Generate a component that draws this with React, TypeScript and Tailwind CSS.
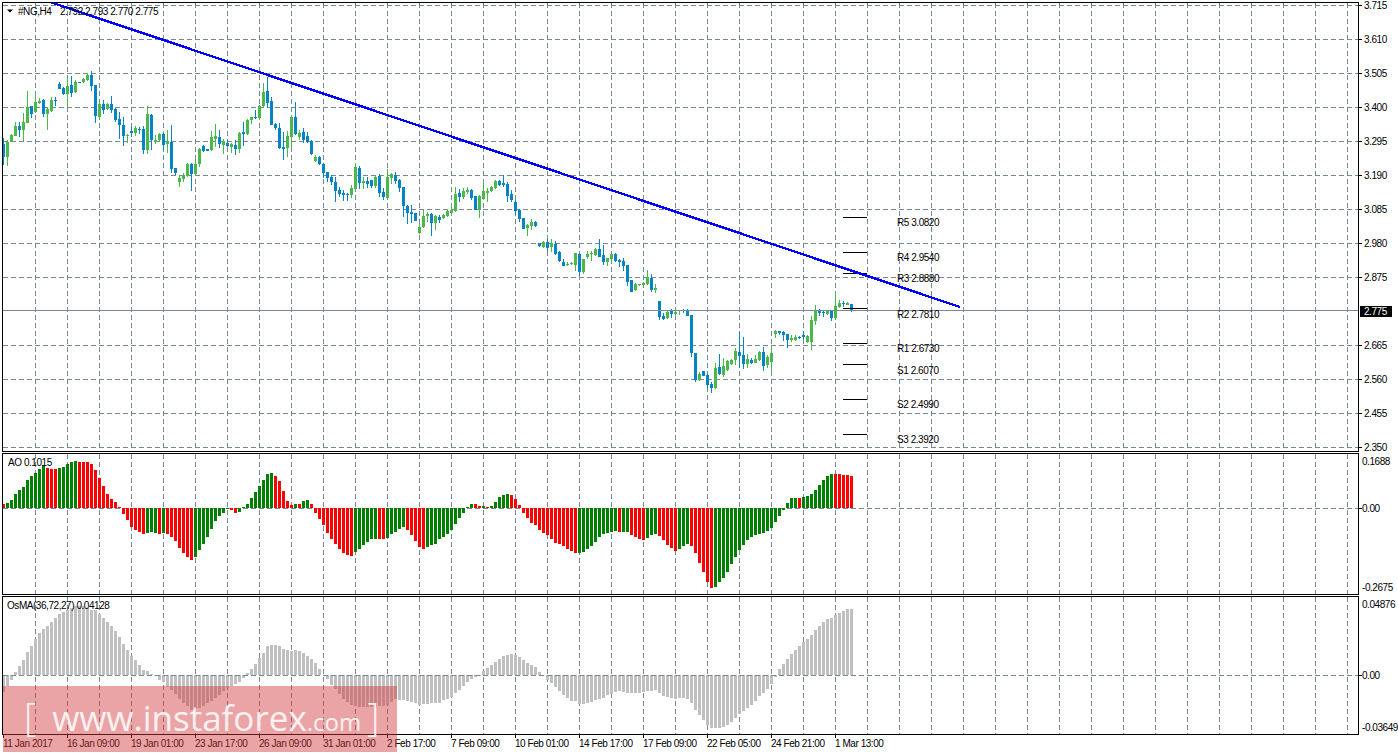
const BLUE = 1;

// wick top, body top, body bottom, wick bottom, colour (page pixels)
const candles: number[][] = [
  [138,144,157,165,1],[140,142,157,166,0],[134,135,142,142,0],[122,126,136,136,0],[122,126,130,137,1],
  [113,122,130,141,0],[91,107,123,123,0],[106,106,114,118,1],[94,102,112,113,0],[98,101,103,104,0],
  [99,100,114,117,1],[107,109,114,130,0],[97,100,111,112,0],[97,100,101,106,1],[82,84,89,89,1],
  [87,88,94,95,1],[76,86,94,107,0],[76,85,93,97,1],[80,82,92,93,0],[82,82,83,83,1],
  [78,79,82,83,0],[73,75,80,81,0],[71,75,86,91,1],[85,85,116,123,1],[100,104,117,118,0],
  [100,104,110,114,1],[103,104,109,110,0],[96,104,110,113,1],[108,109,120,122,1],[112,119,125,139,1],
  [117,125,136,146,1],[134,135,136,143,0],[127,131,133,137,1],[126,128,133,136,0],[127,129,130,134,1],
  [126,129,150,154,1],[106,114,150,154,0],[114,115,140,150,1],[135,140,142,144,0],[133,134,140,142,0],
  [133,134,145,150,1],[130,141,144,153,0],[125,142,169,173,1],[168,168,173,175,1],[175,178,182,187,0],
  [173,175,179,182,0],[163,164,176,177,0],[163,164,174,191,1],[160,164,174,175,0],[148,149,164,167,0],
  [145,146,151,152,1],[149,149,151,151,1],[131,137,150,151,0],[124,136,139,147,0],[130,137,144,148,1],
  [139,141,145,154,0],[140,143,146,147,1],[143,144,147,153,0],[140,145,149,155,1],[132,133,149,153,0],
  [122,132,134,146,1],[119,120,134,135,0],[117,117,120,124,0],[110,117,118,119,1],[105,106,118,119,0],
  [83,92,106,107,0],[77,91,103,108,1],[97,101,125,125,1],[123,124,128,130,1],[123,128,148,149,1],
  [132,147,149,160,1],[131,136,148,157,0],[115,117,137,148,0],[102,117,134,135,1],[130,133,137,140,0],
  [128,132,140,143,1],[132,136,142,143,1],[140,141,154,155,1],[155,157,161,162,0],[156,157,164,165,1],
  [163,164,173,178,1],[172,172,178,182,1],[175,177,182,185,1],[177,182,191,202,1],[187,190,194,197,1],
  [190,193,195,201,1],[193,194,195,201,1],[185,188,195,198,0],[163,167,189,191,0],[166,168,183,189,1],
  [177,181,183,189,0],[177,181,184,188,1],[180,180,186,188,1],[176,177,186,188,0],[174,176,193,197,1],
  [188,192,197,200,1],[169,177,198,199,0],[173,174,178,184,0],[172,175,181,184,1],[179,180,188,192,1],
  [187,187,206,217,1],[205,206,213,224,1],[205,212,214,223,1],[213,213,221,221,1],[224,227,233,234,0],
  [210,216,227,228,0],[212,214,216,222,0],[213,214,223,236,1],[215,216,223,230,0],[215,217,220,223,1],
  [214,215,218,219,0],[210,211,216,217,0],[205,210,213,214,0],[187,194,211,212,0],[189,193,197,202,1],
  [188,191,197,199,0],[187,190,192,194,0],[189,190,198,200,1],[196,196,210,210,1],[195,196,210,218,0],
  [182,191,199,200,0],[188,191,193,202,0],[186,187,191,192,0],[180,181,188,189,0],[180,181,185,186,1],
  [175,183,185,187,1],[182,184,196,202,1],[190,194,200,202,1],[200,202,211,215,1],[209,210,219,222,1],
  [218,218,229,229,1],[224,225,228,236,0],[219,222,226,230,0],[221,222,226,227,1],[243,243,246,247,1],
  [241,242,247,248,0],[239,242,248,251,1],[239,243,247,252,0],[241,244,254,255,1],[251,252,261,262,1],
  [259,262,266,266,1],[262,264,264,266,0],[262,263,264,265,0],[253,253,265,271,0],[253,254,272,276,1],
  [259,259,272,274,0],[251,254,257,259,0],[251,253,254,261,0],[248,249,255,256,0],[239,249,257,257,1],
  [245,255,262,265,1],[258,258,262,266,0],[254,254,259,262,0],[253,254,261,262,1],[259,260,262,267,1],
  [258,261,266,271,1],[265,265,282,286,1],[280,280,292,292,1],[283,284,290,291,0],[284,284,285,286,0],
  [282,283,285,286,0],[270,277,284,285,0],[274,278,290,292,1],[284,288,290,293,0],[301,301,317,320,1],
  [313,316,319,320,1],[311,312,318,319,0],[309,311,314,318,1],[309,312,314,316,0],[310,310,311,315,0],
  [309,310,311,313,1],[309,310,316,316,1],[315,315,353,357,1],[353,353,380,382,1],[372,374,380,381,0],
  [371,371,376,376,1],[374,375,385,388,1],[382,384,388,393,1],[363,368,388,389,0],[354,367,374,375,1],
  [358,366,375,377,0],[360,361,370,371,0],[359,360,364,365,0],[348,351,360,365,0],[332,352,356,368,1],
  [337,355,364,369,1],[354,359,364,368,0],[358,360,363,364,1],[355,359,363,363,0],[351,352,360,361,0],
  [347,352,366,371,1],[355,357,365,368,0],[345,353,362,371,0],[330,331,334,338,0],[331,331,333,335,1],
  [331,332,335,341,1],[334,334,340,348,1],[335,338,340,342,0],[335,337,340,341,0],[336,337,338,339,1],
  [331,335,337,339,1],[335,336,342,343,0],[316,320,342,350,0],[305,311,321,325,0],[309,311,313,316,1],
  [310,312,313,317,1],[310,311,314,315,0],[310,311,318,321,1],[294,306,318,319,0],[300,303,307,308,0],
  [301,303,304,307,1],[302,303,305,305,0],[304,304,311,312,1],
];

const ao = [
  4,5,8,14,18,21,28,32,35,39,43,40,39,39,40,41,44,46,47,46,
  46,46,44,38,30,22,14,9,6,1,-6,-12,-19,-22,-24,-26,-25,-24,-25,-26,
  -25,-26,-29,-33,-40,-45,-49,-52,-49,-42,-36,-29,-21,-13,-8,-5,-1,-2,-5,-4,
  1,4,10,16,22,28,34,35,32,27,17,7,3,4,4,7,8,4,-5,-11,
  -17,-25,-31,-36,-41,-45,-47,-48,-44,-41,-37,-34,-31,-31,-31,-31,-30,-26,-24,-21,
  -19,-22,-27,-33,-39,-41,-39,-37,-36,-31,-29,-26,-22,-16,-10,-5,1,4,4,2,
  2,1,2,6,11,13,14,13,9,3,-5,-10,-15,-17,-22,-25,-27,-31,-35,-36,
  -38,-41,-43,-45,-45,-44,-41,-38,-34,-29,-26,-25,-24,-23,-24,-24,-24,-27,-29,-31,
  -32,-30,-27,-26,-28,-32,-37,-40,-43,-41,-38,-36,-38,-45,-55,-64,-74,-80,-79,-74,
  -70,-64,-56,-49,-42,-37,-32,-29,-27,-26,-25,-23,-20,-14,-8,-2,5,10,10,10,
  11,12,14,18,23,28,32,34,34,34,33,33,32,
];

// index ranges of the falling (red) AO bars
const aoRed = [[0,0],[11,13],[19,35],[39,39],[41,47],[57,58],[68,72],[74,74],[77,87],[94,95],[101,105],[118,119],[121,121],[127,143],[154,154],[157,160],[164,168],[172,177],[199,199],[208,212]];

const osma = [
  -17,-11,-5,3,9,15,23,29,36,42,46,49,53,57,61,63,65,67,69,69,
  69,67,65,65,61,57,53,49,44,38,31,25,19,15,10,5,4,1,-1,-5,
  -7,-12,-15,-19,-24,-28,-31,-35,-34,-33,-31,-28,-26,-23,-20,-16,-13,-11,-9,-7,
  -3,2,6,11,17,22,29,30,30,29,26,25,24,25,24,22,19,16,12,6,
  0,-4,-10,-14,-19,-24,-27,-30,-31,-32,-32,-32,-32,-32,-31,-31,-30,-27,-24,-25,
  -25,-26,-27,-28,-30,-29,-29,-28,-28,-28,-25,-24,-22,-18,-15,-11,-7,-4,-2,-1,
  4,7,10,13,16,19,20,21,20,18,15,12,10,8,3,0,-5,-8,-12,-16,
  -20,-23,-26,-26,-29,-29,-28,-27,-25,-24,-23,-20,-19,-17,-16,-17,-18,-18,-18,-18,
  -17,-16,-16,-15,-18,-21,-22,-23,-24,-23,-23,-24,-28,-35,-40,-45,-50,-53,-53,-53,
  -52,-50,-47,-43,-39,-36,-33,-30,-26,-21,-18,-14,-9,-2,6,11,16,21,25,29,
  33,36,40,45,49,53,56,57,60,62,64,66,66,
];

const pivots = [
  { label: 'R5 3.0820', line: 217, text: 222 },
  { label: 'R4 2.9540', line: 252, text: 257 },
  { label: 'R3 2.8880', line: 273, text: 278 },
  { label: 'R2 2.7810', line: 308, text: 313.5 },
  { label: 'R1 2.6730', line: 343, text: 348 },
  { label: 'S1 2.6070', line: 364, text: 369.5 },
  { label: 'S2 2.4990', line: 399, text: 404 },
  { label: 'S3 2.3920', line: 434, text: 439 },
];

const prices = ['3.715','3.610','3.505','3.400','3.295','3.190','3.085','2.980','2.875','2.775','2.665','2.560','2.455','2.350'];
const times = ['11 Jan 2017','16 Jan 09:00','19 Jan 01:00','23 Jan 17:00','26 Jan 09:00','31 Jan 01:00','2 Feb 17:00','7 Feb 09:00','10 Feb 01:00','14 Feb 17:00','17 Feb 09:00','22 Feb 05:00','24 Feb 21:00','1 Mar 13:00'];

const GRID_X = Array.from({ length: 42 }, (_, i) => 35 + i * 32);
const GRID_Y = [5,39,73,107,141,175,209,243,277,345,379,413,447];

function VGrid({ y1, y2 }: { y1: number; y2: number }) {
  return (
    <g stroke="#778899" strokeDasharray="5 3" shapeRendering="crispEdges">
      {GRID_X.map((x) => (
        <line key={x} x1={x + 0.5} x2={x + 0.5} y1={y1} y2={y2} />
      ))}
    </g>
  );
}

function HLine({ y }: { y: number }) {
  return <line x1={3} x2={1358} y1={y + 0.5} y2={y + 0.5} stroke="#778899" strokeDasharray="5 3" shapeRendering="crispEdges" />;
}

function Bars({ values, base, colour }: { values: number[]; base: number; colour: (i: number) => string }) {
  return (
    <g shapeRendering="crispEdges">
      {values.map((v, i) => (
        <rect key={i} x={2 + i * 4} y={v > 0 ? base - v : base} width={3} height={Math.abs(v)} fill={colour(i)} />
      ))}
    </g>
  );
}

function MainChart() {
  return (
    <svg className="block font-['Liberation_Sans',Arial,sans-serif] text-[10px] tracking-[-0.45px]" width={1355} height={448} viewBox="3 3 1355 448">
      <VGrid y1={3} y2={451} />
      {GRID_Y.map((y) => (
        <HLine key={y} y={y} />
      ))}
      <g shapeRendering="crispEdges">
        {candles.map((c, i) => {
          const fill = c[4] === BLUE ? '#0484c4' : '#4bb84b';
          return (
            <g key={i} fill={fill}>
              <rect x={3 + i * 4} y={c[0]} width={1} height={c[3] - c[0]} />
              <rect x={2 + i * 4} y={c[1]} width={3} height={Math.max(c[2] - c[1], 1)} />
            </g>
          );
        })}
      </g>
      <line x1={3} x2={1358} y1={310.5} y2={310.5} stroke="#778899" shapeRendering="crispEdges" />
      {pivots.map((p) => (
        <line key={p.label} x1={843} x2={867} y1={p.line + 0.5} y2={p.line + 0.5} stroke="#000" shapeRendering="crispEdges" />
      ))}
      <line x1={47} y1={1} x2={960} y2={307} stroke="#0000ff" strokeWidth={2.4} shapeRendering="crispEdges" />
      {pivots.map((p) => (
        <text key={p.label} x={897} y={p.text + 4} fill="#000">
          {p.label}
        </text>
      ))}
      <polygon points="7,9.5 13,9.5 10,12.5" fill="#000" />
      <text x={18} y={14.5} fill="#000">
        #NG,H4
      </text>
      <text x={60} y={14.5} fill="#000">
        2.792 2.793 2.770 2.775
      </text>
    </svg>
  );
}

function PriceAxis() {
  return (
    <div className="-mt-[14px] flex flex-col">
      {prices.map((p) => (
        <div key={p} className="flex h-[34px] shrink-0 items-center">
          {p === '2.775' ? (
            <span className="ml-px h-[11px] w-[32px] bg-black pl-[4px] leading-[12px] text-white">{p}</span>
          ) : (
            <>
              <span className="h-px w-[3px] bg-black" />
              <span className="ml-[2px] pt-[2px] text-black">{p}</span>
            </>
          )}
        </div>
      ))}
    </div>
  );
}

export default function App() {
  return (
    <div className="relative h-[755px] w-[1398px] overflow-hidden bg-white pl-[2px] pt-[2px] font-['Liberation_Sans',Arial,sans-serif] text-[10px] leading-[12px] tracking-[-0.45px]">
      {/* price pane */}
      <div className="flex h-[450px]">
        <div className="h-[450px] w-[1357px] border border-black">
          <MainChart />
        </div>
        <PriceAxis />
      </div>

      {/* AO pane */}
      <div className="mt-px flex h-[142px]">
        <div className="relative h-[142px] w-[1357px] border border-black">
          <svg className="block" width={1355} height={140} viewBox="3 454 1355 140">
            <VGrid y1={454} y2={594} />
            <HLine y={508} />
            <Bars values={ao} base={508} colour={(i) => (aoRed.some(([a, b]) => i >= a && i <= b) ? '#ff0000' : '#008000')} />
          </svg>
          <span className="absolute left-[5px] top-[3px] text-black">AO 0.1015</span>
        </div>
        <div className="flex flex-col text-black">
          <div className="ml-[3px] mt-[3px] h-[12px]">0.1688</div>
          <div className="mt-[34px] flex h-[12px] items-center">
            <span className="h-px w-[3px] bg-black" />
            <span className="pt-[2px]">0.00</span>
          </div>
          <div className="ml-[3px] mt-[68px] h-[12px]">-0.2675</div>
        </div>
      </div>

      {/* OsMA pane */}
      <div className="mt-px flex h-[139px]">
        <div className="relative h-[139px] w-[1357px] border border-black">
          <svg className="block" width={1355} height={137} viewBox="3 597 1355 137">
            <VGrid y1={597} y2={734} />
            <Bars values={osma} base={675} colour={() => '#c0c0c0'} />
            <HLine y={675} />
          </svg>
          <span className="absolute left-[4px] top-[3px] text-black">OsMA(36,72,27) 0.04128</span>
        </div>
        <div className="flex flex-col text-black">
          <div className="ml-[3px] mt-[3px] h-[12px]">0.04876</div>
          <div className="mt-[58px] flex h-[12px] items-center">
            <span className="h-px w-[3px] bg-black" />
            <span className="pt-[2px]">0.00</span>
          </div>
          <div className="ml-[3px] mt-[41px] h-[12px]">-0.03649</div>
        </div>
      </div>

      {/* time axis */}
      <div className="ml-px flex">
        {times.map((t) => (
          <div key={t} className="w-[64px] shrink-0 whitespace-nowrap text-black">
            <div className="h-[3px] w-px bg-black" />
            <div>{t}</div>
          </div>
        ))}
      </div>

      {/* watermark */}
      <div className="absolute left-[3px] top-[686px] flex h-[66px] w-[394px] items-baseline bg-[rgba(211,53,58,0.45)] pl-[21px] pt-[8px] font-['Open_Sans',sans-serif] leading-[44px] tracking-normal text-white/85">
        <span className="text-[38px] font-light">[</span>
        <span className="ml-[16px] text-[35px]">www.instaforex</span>
        <span className="text-[24px]">.com</span>
        <span className="ml-[6px] text-[38px] font-light">]</span>
      </div>
    </div>
  );
}
